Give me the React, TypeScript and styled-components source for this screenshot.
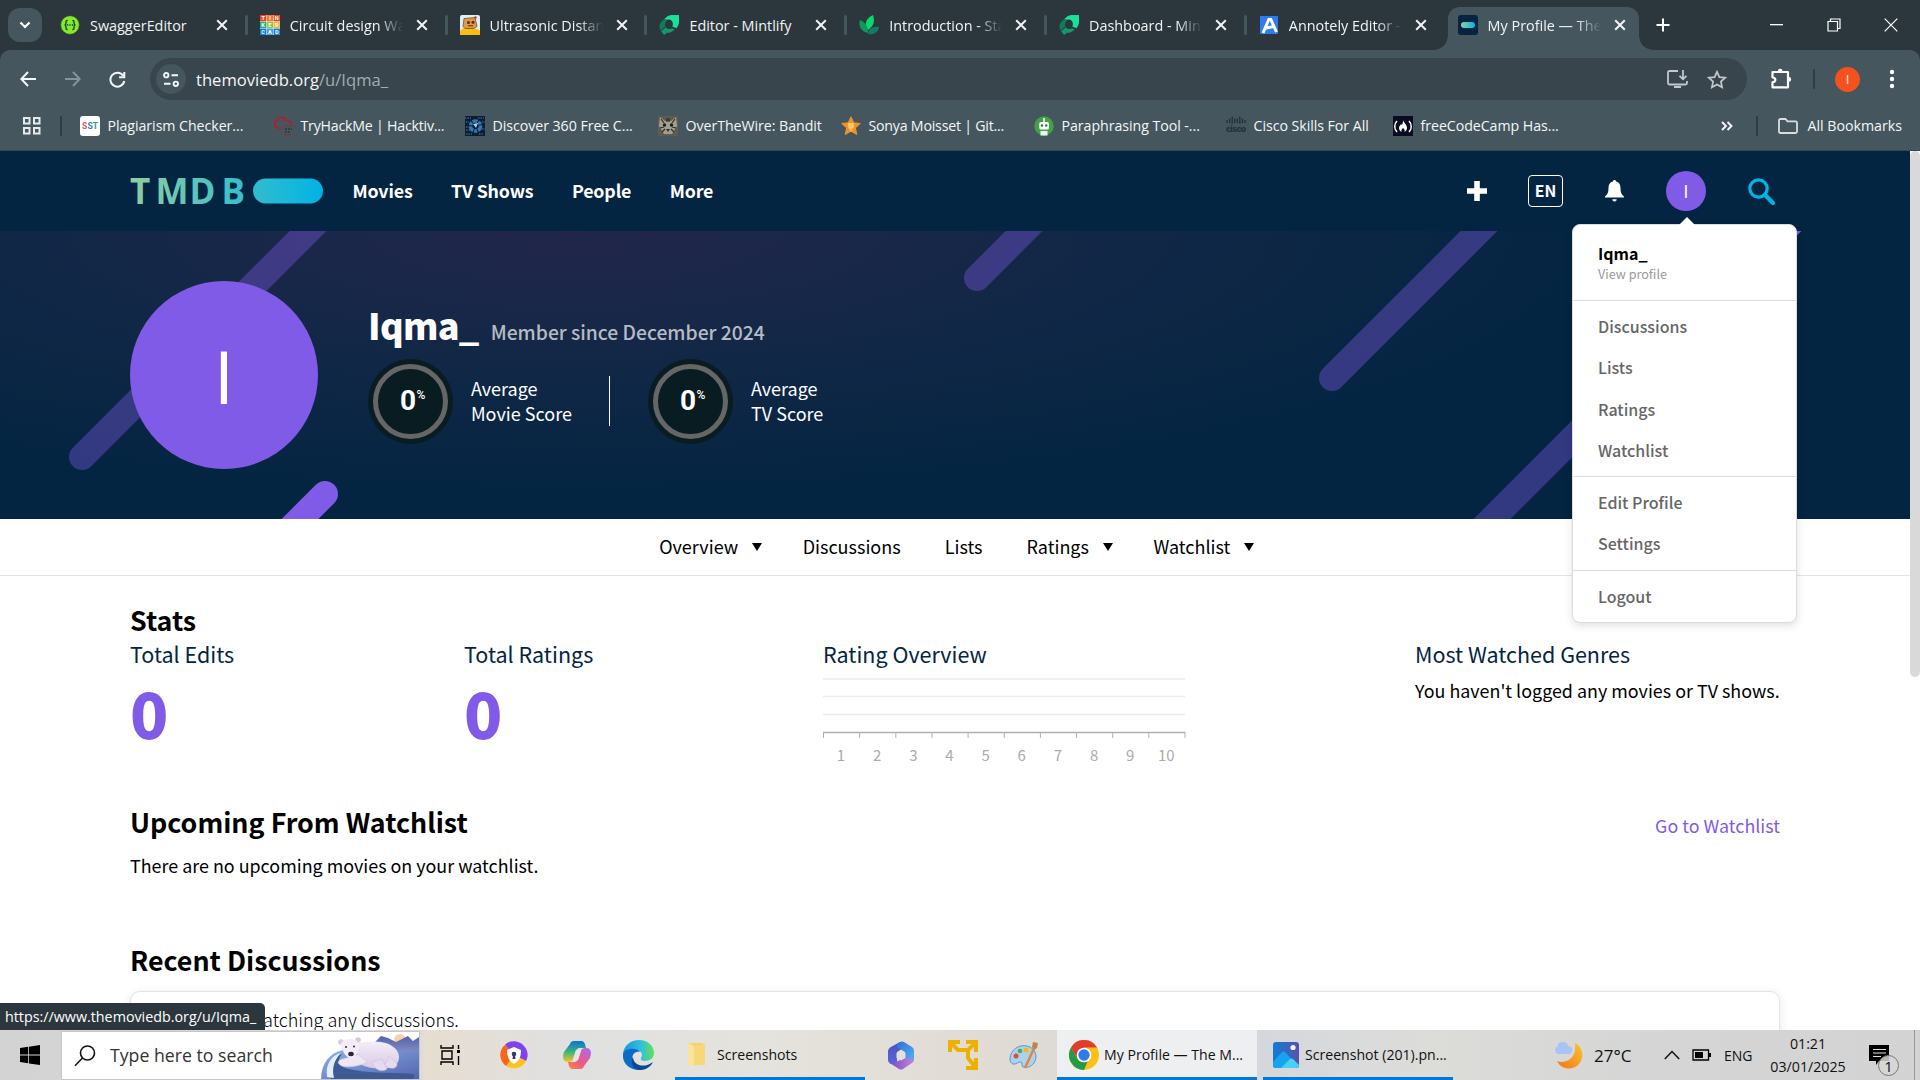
import React from "react";
import styled, { createGlobalStyle, css } from "styled-components";

const site = `"Noto Sans CJK SC", "Noto Sans", sans-serif`;
const system = `"Open Sans", "Noto Sans", sans-serif`;

const color = {
  strip: "#2c373d",
  chrome: "#45565f",
  omnibox: "#38454c",
  navy: "#032541",
  purple: "#805be7",
  blue: "#01b4e4",
  line: "#e3e3e3",
};

const GlobalStyle = createGlobalStyle`
  * { box-sizing: border-box; }
  html, body { margin: 0; padding: 0; overflow: hidden; background: #fff; }
  svg { display: block; flex: none; }
`;

const Screen = styled.div`
  position: relative;
  display: flex;
  flex-direction: column;
  width: 1920px;
  height: 1080px;
  overflow: hidden;
  font-family: ${site};
  color: #000;
`;

/* ---------- Browser chrome ---------- */

const TabStrip = styled.div`
  display: flex;
  height: 50px;
  padding-left: 8px;
  background: ${color.strip};
  font-family: ${system};
`;

const TabSearch = styled.div`
  display: grid;
  place-items: center;
  width: 34px;
  height: 34px;
  margin-top: 8px;
  border-radius: 12px;
  background: ${color.chrome};
`;

const Tabs = styled.div`
  display: flex;
  margin-left: 6px;
`;

const Tab = styled.div<{ $active?: boolean; $divider?: boolean }>`
  position: relative;
  display: flex;
  align-items: center;
  width: 199.8px;
  height: 50px;
  padding-left: 12px;
  color: #f1f4f5;
  ${(p) =>
    p.$divider &&
    css`
      &::after {
        content: "";
        position: absolute;
        right: 0;
        top: 15px;
        width: 3px;
        height: 20px;
        border-radius: 2px;
        background: ${color.chrome};
      }
    `}
  ${(p) =>
    p.$active &&
    css`
      width: 191px;
      margin-top: 7px;
      height: 43px;
      padding-bottom: 7px;
      padding-left: 10px;
      margin-left: 1px;
      border-radius: 12px 12px 0 0;
      background: ${color.chrome};
      &::before,
      &::after {
        content: "";
        position: absolute;
        bottom: 0;
        width: 14px;
        height: 14px;
      }
      &::before {
        left: -14px;
        background: radial-gradient(circle at 0 0, transparent 13.5px, ${color.chrome} 14px);
      }
      &::after {
        right: -14px;
        background: radial-gradient(circle at 100% 0, transparent 13.5px, ${color.chrome} 14px);
      }
    `}
`;

const TabTitle = styled.span<{ $fade?: boolean }>`
  width: 113px;
  margin-left: 10px;
  padding-top: 1px;
  overflow: hidden;
  white-space: nowrap;
  font-size: 14.4px;
  line-height: 22px;
  ${(p) => p.$fade && css`mask-image: linear-gradient(90deg, #000 78%, transparent);`}
`;

const TabClose = styled.span`
  display: grid;
  place-items: center;
  width: 20px;
  margin-left: 9px;
`;

const NewTab = styled.div`
  display: grid;
  place-items: center;
  width: 34px;
  height: 50px;
  margin-left: 7px;
`;

const WindowButtons = styled.div`
  display: flex;
  margin-left: auto;
  padding-right: 1px;
`;

const WindowButton = styled.div`
  display: grid;
  place-items: center;
  width: 57px;
  height: 50px;
`;

const Toolbar = styled.div`
  display: flex;
  align-items: center;
  height: 58px;
  background: ${color.chrome};
  border-radius: 10px 10px 0 0;
  font-family: ${system};
`;

const ToolbarWrap = styled.div`
  background: ${color.strip};
`;

const NavButton = styled.div`
  display: grid;
  place-items: center;
  width: 45px;
  &:first-child { margin-left: 5px; }
`;

const Omnibox = styled.div`
  display: flex;
  align-items: center;
  width: 1597px;
  height: 42px;
  margin-left: 10px;
  padding: 0 20px 0 6px;
  border-radius: 21px;
  background: ${color.omnibox};
`;

const SiteInfo = styled.div`
  display: grid;
  place-items: center;
  width: 30px;
  height: 30px;
  border-radius: 50%;
  background: ${color.chrome};
`;

const Url = styled.div`
  flex: 1;
  margin-left: 10px;
  padding-top: 1px;
  font-size: 16.6px;
  line-height: 24px;
  color: #f4f6f7;
  span { color: #a4acb0; }
`;

const OmniIcons = styled.div`
  display: flex;
  align-items: center;
  gap: 19px;
`;

const ToolbarEnd = styled.div`
  display: flex;
  align-items: center;
  margin-left: 23px;
`;

const Separator = styled.i<{ $l: number; $r: number }>`
  width: 2px;
  height: 20px;
  margin: 0 ${(p) => p.$r}px 0 ${(p) => p.$l}px;
  border-radius: 1px;
  background: #2f3c43;
`;

const ProfileDot = styled.div`
  display: grid;
  place-items: center;
  width: 25px;
  height: 25px;
  margin-right: 22px;
  border-radius: 50%;
  background: #f4511e;
  color: #fff;
  font-size: 13px;
`;

const Bookmarks = styled.div`
  display: flex;
  align-items: center;
  height: 43px;
  padding: 0 18px 7px 22px;
  background: ${color.chrome};
  border-bottom: 1px solid #394952;
  font-family: ${system};
  font-size: 14.2px;
  color: #f4f6f7;
  white-space: nowrap;
`;

const Bookmark = styled.div<{ $w: number; $tight?: boolean }>`
  display: flex;
  align-items: center;
  gap: 7.5px;
  width: ${(p) => p.$w}px;
  letter-spacing: ${(p) => (p.$tight ? "-0.22px" : "-0.05px")};
`;

const BookmarksEnd = styled.div`
  display: flex;
  align-items: center;
  margin-left: auto;
`;

const AllBookmarks = styled.span`
  margin-left: 9px;
`;

/* ---------- Site ---------- */

const Viewport = styled.div`
  display: flex;
  height: 879px;
  background: #fff;
`;

const Page = styled.div`
  width: 1910px;
  height: 879px;
  overflow: hidden;
`;

const Scrollbar = styled.div`
  width: 10px;
  background: #fff;
`;

const Thumb = styled.div`
  height: 526px;
  border-radius: 5px;
  background: #d9d9d9;
`;

const Header = styled.header`
  display: flex;
  align-items: center;
  height: 80px;
  padding: 0 130px;
  background: ${color.navy};
  color: #fff;
`;

const MainNav = styled.nav`
  display: flex;
  gap: 38.4px;
  margin: -2px 0 0 28.5px;
  font-size: 17.8px;
  font-weight: 700;
  letter-spacing: -0.15px;
  line-height: 26px;
`;

const HeaderTools = styled.div`
  display: flex;
  align-items: center;
  margin-left: auto;
  padding-right: 5px;
`;

const Language = styled.div`
  display: grid;
  place-items: center;
  width: 35px;
  height: 32px;
  margin: 0 42px 0 41px;
  border: 1.5px solid #fff;
  border-radius: 4px;
  font-size: 15.8px;
  font-weight: 700;
  line-height: 24px;
`;

const HeaderAvatar = styled.div`
  display: grid;
  place-items: center;
  width: 40px;
  height: 40px;
  margin: 0 42px 0 42px;
  border-radius: 50%;
  background: ${color.purple};
  font-family: ${system};
  font-size: 19px;
  line-height: 22px;
`;

const Hero = styled.section`
  position: relative;
  display: flex;
  align-items: center;
  height: 288px;
  padding: 0 130px;
  overflow: hidden;
  color: #fff;
  background: radial-gradient(ellipse 1060px 268px at 30% 0%, #21264a 0%, #1a2749 25%, #102746 55%, #032541 100%);
`;

const HeroBars = styled.svg`
  position: absolute;
  inset: 0;
`;

const BigAvatar = styled.div`
  position: relative;
  display: grid;
  place-items: center;
  width: 188px;
  height: 188px;
  border-radius: 50%;
  background: ${color.purple};
  font-family: ${system};
  font-size: 73px;
  line-height: 90px;
  padding-top: 2px;
`;

const HeroInfo = styled.div`
  position: relative;
  margin: -7px 0 0 50px;
`;

const NameLine = styled.div`
  display: flex;
  align-items: baseline;
  height: 48px;
  line-height: 48px;
`;

const Name = styled.h2`
  margin: 0;
  font-size: 36px;
  font-weight: 900;
  letter-spacing: -0.7px;
`;

const Since = styled.span`
  margin-left: 12px;
  font-size: 19.3px;
  font-weight: 500;
  color: rgba(255, 255, 255, 0.7);
`;

const Scores = styled.div`
  display: flex;
  align-items: center;
  height: 85px;
  margin: 11px 0 0 0;
`;

const Dial = styled.div`
  display: grid;
  place-items: center;
  width: 85px;
  height: 85px;
  padding: 5px;
  border-radius: 50%;
  background: #081c22;
`;

const DialRing = styled.div`
  display: flex;
  align-items: center;
  justify-content: center;
  width: 75px;
  height: 75px;
  padding: 0 0 1px 4px;
  border: 5px solid #666;
  border-radius: 50%;
  font-family: Roboto, sans-serif;
  font-size: 28px;
  font-weight: 700;
  letter-spacing: -0.5px;
  sup {
    align-self: flex-start;
    margin: 20px 0 0 1px;
    font-size: 12px;
    font-weight: 500;
    line-height: 12px;
  }
`;

const DialLabel = styled.div`
  width: 138px;
  margin-left: 18px;
  font-size: 18px;
  line-height: 25px;
`;

const ScoreDivider = styled.i`
  width: 1px;
  height: 50px;
  margin-right: 38px;
  background: #fff;
`;

const SubNav = styled.nav`
  display: flex;
  justify-content: center;
  gap: 44px;
  height: 57px;
  border-bottom: 1px solid ${color.line};
  font-size: 18px;
  line-height: 55px;
`;

const SubNavItem = styled.div`
  display: flex;
  align-items: center;
  height: 55px;
`;

const Caret = styled.i`
  margin: 0 -3.5px 0 14px;
  border: 5.5px solid transparent;
  border-top: 8.5px solid #000;
  border-bottom: 0;
`;

const Content = styled.main`
  padding: 23px 130px 0;
`;

const Section = styled.section<{ $h: number }>`
  height: ${(p) => p.$h}px;
`;

const SectionHead = styled.div`
  display: flex;
  justify-content: space-between;
  height: 40px;
  line-height: 40px;
`;

const Title = styled.h3`
  margin: 0;
  padding-top: 1px;
  font-size: 26.8px;
  font-weight: 700;
`;

const WatchlistLink = styled.a`
  padding-top: 4px;
  font-size: 17.9px;
  color: ${color.purple};
`;

const StatGrid = styled.div`
  display: grid;
  grid-template-columns: 334px 359px 592px 1fr;
`;

const StatLabel = styled.h4`
  margin: 0;
  font-size: 21.5px;
  font-weight: 400;
  line-height: 30px;
  color: ${color.navy};
`;

const StatValue = styled.div`
  margin-top: 7px;
  font-size: 63px;
  font-weight: 900;
  line-height: 72px;
  color: ${color.purple};
`;

const Paragraph = styled.p<{ $top: number }>`
  margin: ${(p) => p.$top}px 0 0;
  font-size: 17.9px;
  line-height: 25px;
  white-space: nowrap;
`;

const Chart = styled.svg`
  margin-top: 6px;
  font-family: ${site};
`;

const DiscussionCard = styled.div`
  height: 120px;
  margin-top: 12px;
  padding: 15px 25px 15px 33px;
  border: 1px solid ${color.line};
  border-radius: 10px;
  box-shadow: 0 2px 10px rgba(0, 0, 0, 0.1);
  font-size: 18px;
  font-weight: 300;
  line-height: 25px;
`;

/* ---------- Account menu ---------- */

const Menu = styled.div`
  position: absolute;
  left: 1572px;
  top: 224px;
  width: 225px;
  height: 399px;
  border: 1px solid #dcdcdc;
  border-radius: 8px;
  background: #fff;
  box-shadow: 0 3px 8px rgba(0, 0, 0, 0.12);
  &::before {
    content: "";
    position: absolute;
    left: 106px;
    top: -8px;
    border: 8px solid transparent;
    border-top: 0;
    border-bottom-color: #fff;
  }
`;

const MenuGroup = styled.div<{ $h: number }>`
  height: ${(p) => p.$h}px;
  padding: 5px 25px 0;
  & + & { border-top: 1px solid #dcdcdc; }
`;

const MenuItem = styled.div`
  height: 41.4px;
  font-size: 16px;
  font-weight: 500;
  line-height: 40px;
  color: #666;
`;

const MenuName = styled.div`
  margin-top: 11px;
  font-size: 16px;
  font-weight: 700;
  line-height: 24px;
`;

const MenuHint = styled.div`
  padding-top: 1px;
  font-size: 12.6px;
  line-height: 16px;
  color: #999;
`;

const StatusBubble = styled.div`
  position: absolute;
  left: 0;
  top: 1003px;
  width: 265px;
  height: 27px;
  padding-left: 5px;
  border-radius: 0 5px 0 0;
  background: ${color.strip};
  color: #fff;
  font-family: ${system};
  font-size: 14.3px;
  line-height: 28px;
  white-space: nowrap;
`;

/* ---------- Taskbar ---------- */

const Taskbar = styled.div`
  display: flex;
  height: 50px;
  background: linear-gradient(90deg, #d3d3d3 0, #dadada 420px, #e7ddd0 424px, #e0e0e0 560px, #e5e3dd 760px, #e0dbd4 1000px, #d6d7dc 1260px, #dcddd9 1430px, #d5d5d5 1650px, #d3d3d3 100%);
  font-family: ${system};
  color: #111;
`;

const Start = styled.div`
  display: grid;
  place-items: center;
  width: 61px;
  padding-right: 1px;
`;

const Search = styled.div`
  position: relative;
  display: flex;
  align-items: center;
  width: 359px;
  height: 49px;
  margin-top: 1px;
  padding-left: 12px;
  background: #fff;
  border: 1px solid #c6c6c6;
  font-size: 17.7px;
  color: #333;
  overflow: hidden;
  span { margin: -2px 0 0 14px; }
`;

const BearArt = styled.svg`
  margin-left: auto;
`;

const TaskIcon = styled.div<{ $w: number }>`
  display: grid;
  place-items: center;
  width: ${(p) => p.$w}px;
`;

const TaskWindow = styled.div<{ $w: number; $gap: number; $active?: boolean; $pad: number; $space: number }>`
  display: flex;
  align-items: center;
  width: ${(p) => p.$w}px;
  margin-left: ${(p) => p.$gap}px;
  padding: 2px 0 0 ${(p) => p.$pad}px;
  border-bottom: 3px solid #0078d7;
  background: ${(p) => (p.$active ? "#eeeff1" : "transparent")};
  font-size: 14.1px;
  white-space: nowrap;
  svg { margin-right: ${(p) => p.$space}px; }
`;

const Tray = styled.div`
  display: flex;
  align-items: center;
  margin-left: auto;
`;

const Temperature = styled.span`
  width: 70px;
  margin-left: 10px;
  font-size: 17px;
`;

const Lang = styled.span`
  width: 46px;
  font-size: 14px;
`;

const Clock = styled.div`
  width: 76px;
  font-size: 14.2px;
  line-height: 23px;
  text-align: center;
  white-space: nowrap;
`;

const Notifications = styled.div`
  position: relative;
  margin: 0 5px 0 23px;
  width: 40px;
`;

const Count = styled.b`
  position: absolute;
  left: 9px;
  top: 10px;
  display: grid;
  place-items: center;
  width: 21px;
  height: 21px;
  border: 1px solid #777;
  border-radius: 50%;
  background: rgba(214, 214, 214, 0.85);
  font-size: 15px;
  font-weight: 400;
`;

const ShowDesktop = styled.i`
  width: 6px;
  height: 50px;
  border-left: 1px solid #999;
`;

/* ---------- Icons ---------- */

const Cross = () => (
  <svg width="12" height="12" viewBox="0 0 12 12" stroke="#f1f4f5" strokeWidth="2">
    <path d="M1.2 1.2l9.6 9.6M10.8 1.2L1.2 10.8" />
  </svg>
);

const Swagger = () => (
  <svg width="20" height="20" viewBox="0 0 20 20">
    <circle cx="10" cy="10" r="9.3" fill="#85ea2d" stroke="#2c4a1c" strokeWidth=".6" />
    <g fill="none" stroke="#173647" strokeWidth="1.3">
      <path d="M7.6 5.5c-2 0-1.6 1-1.6 2.600s-.4 1.900-1.400 1.900c1 0 1.400.4 1.400 1.900s-.4 2.600 1.600 2.600M12.400 5.500c2 0 1.600 1 1.600 2.600s.4 1.900 1.400 1.900c-1 0-1.400.4-1.400 1.900s.4 2.600-1.600 2.600" />
      <path d="M7 10h1.200M9.400 10h1.200M11.800 10h1.200" />
    </g>
  </svg>
);

const tinkercad = [
  ["T", "#f0441f"], ["I", "#f4772c"], ["N", "#f0441f"],
  ["K", "#24b27c"], ["E", "#8dc63f"], ["R", "#fbb034"],
  ["C", "#1477d1"], ["A", "#3aa4de"], ["D", "#1477d1"],
];

const Tinkercad = () => (
  <svg width="20" height="20" viewBox="0 0 20 20">
    <rect width="20" height="20" fill="#f4f4f4" />
    {tinkercad.map(([letter, fill], i) => (
      <g key={i} transform={`translate(${(i % 3) * 6.8},${Math.floor(i / 3) * 6.8})`}>
        <rect width="6.3" height="6.3" fill={fill} />
        <text x="3.15" y="5.2" textAnchor="middle" fontFamily="Roboto" fontWeight="700" fontSize="5.6" fill="#fff">{letter}</text>
      </g>
    ))}
  </svg>
);

const Robot = () => (
  <svg width="20" height="20" viewBox="0 0 20 20">
    <rect width="20" height="20" rx="2" fill="#dfeffa" />
    <path d="M0 20v-4c3-4 6-4 10-3s8 0 10 3v4z" fill="#fbbd12" />
    <path d="M4 3.500l11-1 2 9-3 2H5l-2-2z" fill="#dd9a48" stroke="#6b421f" strokeWidth=".7" />
    <circle cx="8.5" cy="7.500" r="1.5" fill="#5a2c18" />
    <circle cx="13" cy="7.200" r="1.5" fill="#5a2c18" />
    <path d="M8 10.800h5" stroke="#7a1f12" />
    <circle cx="15.5" cy="2.500" r="1.200" fill="#c53a22" />
  </svg>
);

const Mintlify = () => (
  <svg width="20" height="20" viewBox="0 0 20 20">
    <path d="M8.500 1.200C10 .3 12 0 14 0h6v6.500c0 3-1 5-2.700 6.700l-3.900-1.700c1-2.300.5-4.500-1-5.900-1-.9-2.500-1.300-4-.8L5 4.300z" fill="#18e299" />
    <path d="M5 4.300l3.200 1.300c-2.100 1.500-2.600 4-1.900 6L1.600 15.600C-.6 12 .3 7.500 5 4.300z" fill="#15795a" />
    <path d="M2 16.200l4.800-3.900c1.300 1.900 3.800 2.400 6 .9l2.900 1.300c-2.500 2.600-5 3.500-7.700 3.300L5.200 20z" fill="#0f9a6c" />
  </svg>
);

const Leaf = () => (
  <svg width="20" height="20" viewBox="0 0 20 20">
    <path d="M14 0c2 6 1 11-5 15C5 10 6 4 14 0z" fill="#0dd66c" />
    <path d="M1 5c5 2 8 6 8 13C3 17-1 12 1 5z" fill="#0a9b5c" />
    <path d="M20 12c-1 6-6 8-11 7 0-5 5-8 11-7z" fill="#17786a" />
  </svg>
);

const Annotely = () => (
  <svg width="20" height="20" viewBox="0 0 20 20">
    <rect x="1" y="1" width="18" height="18" fill="#2f7bf0" />
    <path d="M4 18L9.800 4.500h2L17.500 17M5.500 13.500l9-2" fill="none" stroke="#fff" strokeWidth="3" />
  </svg>
);

const TmdbIcon = () => (
  <svg width="20" height="20" viewBox="0 0 20 20">
    <defs>
      <linearGradient id="tmdbIcon"><stop stopColor="#90cea1" /><stop offset="1" stopColor="#01b4e4" /></linearGradient>
    </defs>
    <rect width="20" height="20" rx="3" fill="#032541" />
    <rect x="3" y="7" width="14" height="6" rx="3" fill="url(#tmdbIcon)" />
  </svg>
);

const Sst = () => (
  <svg width="20" height="20" viewBox="0 0 20 20" fontFamily="Roboto" fontWeight="700" fontSize="8.5">
    <rect width="20" height="20" rx="3" fill="#fff" />
    <text x="2" y="13" fill="#ef5350">S</text>
    <text x="7.5" y="13" fill="#2f7bd8">S</text>
    <text x="12.8" y="13" fill="#25a56a">T</text>
  </svg>
);

const TryHackMe = () => (
  <svg width="20" height="20" viewBox="0 0 20 20">
    <path d="M8 12H4.500a4 4 0 01-.5-7.500C5 1 11 0 13 4.500c3-.5 5 1 5 3.500" fill="none" stroke="#c1171d" strokeWidth="1.4" />
    <path d="M11 10h8M11 19h7" stroke="#a71c24" strokeWidth="1.600" strokeDasharray="2 1" opacity=".8" />
    <path d="M12 13h7M12 16h6" stroke="#2a3740" strokeWidth="1.600" strokeDasharray="2 1" />
  </svg>
);

const Discover = () => (
  <svg width="20" height="20" viewBox="0 0 20 20">
    <rect width="20" height="20" fill="#0d1d30" />
    <circle cx="10.500" cy="10" r="5" fill="none" stroke="#3577b3" strokeWidth="3.500" strokeDasharray="5 1 3 1" />
    <path d="M8 8l5-1-2 5z" fill="#9fd0ef" />
    <path d="M0 2h6M13 2h6M1 18h6M14 18h5M1 6h3M1 11h3M1 14h4M17 6h3M17 13h3" stroke="#315f8d" strokeWidth="1.5" strokeDasharray="1.5 1" />
  </svg>
);

const Cat = () => (
  <svg width="20" height="20" viewBox="0 0 20 20">
    <rect width="20" height="20" fill="#5e5b50" />
    <path d="M2 1l5 4h6l5-4 1 9-5 8H6L1 10z" fill="#a3a08f" />
    <path d="M3 3l3 4M17 3l-3 4M9 2v4M11 2v4M2 12l4-1M18 12l-4-1M4 16l3-3M16 16l-3-3" stroke="#2d2c26" strokeWidth="1.2" />
    <circle cx="6.5" cy="9" r="1.7" fill="#1b1d18" />
    <circle cx="13.5" cy="9" r="1.7" fill="#1b1d18" />
    <path d="M8 13h4l-2 3z" fill="#34302b" />
  </svg>
);

const StarIcon = () => (
  <svg width="20" height="20" viewBox="0 0 20 20">
    <path d="M10 .8l2.800 6 6.500.7-4.900 4.400 1.400 6.600L10 15.200l-5.800 3.300 1.400-6.600L.7 7.500l6.500-.7z" fill="#f0932b" stroke="#f0932b" strokeWidth="1" strokeLinejoin="round" />
    <path d="M7 7h6v3c0 2-1.300 3-2.300 3v2h-1.400v-2C8.300 13 7 12 7 10z" fill="#fbc761" />
  </svg>
);

const Quill = () => (
  <svg width="20" height="20" viewBox="0 0 20 20">
    <circle cx="10" cy="10" r="9.7" fill="#43a047" />
    <path d="M10 2v4" stroke="#fff" strokeWidth="1.5" />
    <rect x="5.3" y="6" width="9.6" height="7.5" rx="1.5" fill="#fff" />
    <path d="M6.500 15h7v4.500h-7z" fill="#e9f5ea" />
    <circle cx="8" cy="9.5" r="1.2" fill="#2e6e33" />
    <circle cx="12.2" cy="9.5" r="1.2" fill="#2e6e33" />
  </svg>
);

const Cisco = () => (
  <svg width="20" height="20" viewBox="0 0 20 20">
    <path d="M1 4v3M3.600 2.500V7M6.200 .5V8M8.700 2.500V7M11.300 2.500V7M13.800 .5V8M16.400 2.500V7M19 4v3" stroke="#253138" strokeWidth="1.3" />
    <text x="0" y="16" fontFamily="Roboto" fontWeight="900" fontSize="9" textLength="20" fill="#253138">cisco</text>
  </svg>
);

const Camp = () => (
  <svg width="20" height="20" viewBox="0 0 20 20">
    <rect width="20" height="20" fill="#0a0a23" />
    <path d="M4 5c-3 3-3 8 0 11M16 5c3 3 3 8 0 11" fill="none" stroke="#fff" strokeWidth="1.5" />
    <path d="M10 4c.5 3 4 4 4 8 0 2-1.200 3.300-2.500 4 .6-1.500.3-2.700-1.500-4-1.500 1.200-2 2.500-1.500 4C7 15 6 13.700 6 12c0-2 1.500-2.500 2-4l.8 1C9.800 8 10 6 10 4z" fill="#fff" />
  </svg>
);

const tabs = [
  { icon: <Swagger />, title: "SwaggerEditor" },
  { icon: <Tinkercad />, title: "Circuit design Wa", fade: true },
  { icon: <Robot />, title: "Ultrasonic Distan", fade: true },
  { icon: <Mintlify />, title: "Editor - Mintlify" },
  { icon: <Leaf />, title: "Introduction - Sta", fade: true },
  { icon: <Mintlify />, title: "Dashboard - Min", fade: true },
  { icon: <Annotely />, title: "Annotely Editor - ", fade: true },
];

const bookmarks = [
  { icon: <Sst />, title: "Plagiarism Checker...", w: 193 },
  { icon: <TryHackMe />, title: "TryHackMe | Hacktiv...", w: 192, tight: true },
  { icon: <Discover />, title: "Discover 360 Free C...", w: 193 },
  { icon: <Cat />, title: "OverTheWire: Bandit", w: 183 },
  { icon: <StarIcon />, title: "Sonya Moisset | Git...", w: 193, tight: true },
  { icon: <Quill />, title: "Paraphrasing Tool -...", w: 192 },
  { icon: <Cisco />, title: "Cisco Skills For All", w: 167 },
  { icon: <Camp />, title: "freeCodeCamp Has...", w: 180 },
];

const Browser = () => (
  <>
    <TabStrip>
      <TabSearch>
        <svg width="12" height="8" viewBox="0 0 12 8" fill="none" stroke="#fff" strokeWidth="2.2"><path d="M1.500 1.500L6 6l4.500-4.500" /></svg>
      </TabSearch>
      <Tabs>
        {tabs.map((t, i) => (
          <Tab key={i} $divider={i < 6}>
            {t.icon}
            <TabTitle $fade={t.fade}>{t.title}</TabTitle>
            <TabClose><Cross /></TabClose>
          </Tab>
        ))}
        <Tab $active>
          <TmdbIcon />
          <TabTitle $fade>My Profile — The</TabTitle>
          <TabClose><Cross /></TabClose>
        </Tab>
      </Tabs>
      <NewTab>
        <svg width="14" height="14" viewBox="0 0 14 14" stroke="#fff" strokeWidth="2"><path d="M7 .5v13M.5 7h13" /></svg>
      </NewTab>
      <WindowButtons>
        <WindowButton><svg width="13" height="2"><rect width="13" height="1.3" fill="#fff" /></svg></WindowButton>
        <WindowButton>
          <svg width="14" height="14" viewBox="0 0 14 14" fill="none" stroke="#fff" strokeWidth="1.2"><path d="M1 3.500h9.500V13H1zM3.500 3.500V1H13v9.500h-2.500" /></svg>
        </WindowButton>
        <WindowButton>
          <svg width="14" height="14" viewBox="0 0 14 14" stroke="#fff" strokeWidth="1.2"><path d="M.7.7l12.600 12.600M13.300.7L.7 13.300" /></svg>
        </WindowButton>
      </WindowButtons>
    </TabStrip>
    <ToolbarWrap>
      <Toolbar>
        <NavButton>
          <svg width="16" height="16" viewBox="0 0 16 16" fill="none" stroke="#f4f6f7" strokeWidth="2"><path d="M16 8H1.500M8 1L1.300 8 8 15" /></svg>
        </NavButton>
        <NavButton>
          <svg width="16" height="16" viewBox="0 0 16 16" fill="none" stroke="#87939a" strokeWidth="2"><path d="M0 8h14.500M8 1l6.700 7L8 15" /></svg>
        </NavButton>
        <NavButton>
          <svg width="17" height="17" viewBox="0 0 17 17" fill="none" stroke="#f4f6f7" strokeWidth="2"><path d="M14.200 4.700A7 7 0 1015.300 10M15.300 1v5.200h-5.200" /></svg>
        </NavButton>
        <Omnibox>
          <SiteInfo>
            <svg width="16" height="15" viewBox="0 0 16 15" fill="none" stroke="#f4f6f7" strokeWidth="1.9"><circle cx="3.2" cy="3.2" r="2.2" /><path d="M8.500 3.200H15M1 11.800h6.500" /><circle cx="12.8" cy="11.8" r="2.2" /></svg>
          </SiteInfo>
          <Url>themoviedb.org<span>/u/Iqma_</span></Url>
          <OmniIcons>
            <svg width="21" height="18" viewBox="0 0 21 18" fill="none" stroke="#c2c8cb" strokeWidth="1.8"><path d="M11 1H2.500Q1 1 1 2.500v10.500Q1 14.500 2.500 14.500h16q1.500 0 1.500-1.500v-2M7 17h7M16 0v9M12.500 5.800L16 9.300l3.500-3.500" /></svg>
            <svg width="20" height="19" viewBox="0 0 20 19" fill="none" stroke="#c2c8cb" strokeWidth="1.7"><path d="M10 1.800l2.400 5.300 5.800.6-4.300 3.900 1.200 5.700-5.100-2.900-5.100 2.900 1.200-5.700-4.300-3.900 5.800-.6z" /></svg>
          </OmniIcons>
        </Omnibox>
        <ToolbarEnd>
          <svg width="22" height="22" viewBox="0 0 22 22" fill="none" stroke="#fff" strokeWidth="2.2"><path d="M2.500 4h15.500v15.300H2.500v-5c3.800-.6 3.800-4.400 0-5z" strokeLinejoin="round" /><path d="M7.800 3.200a2.400 2.400 0 014.800 0zM18.800 9a2.400 2.400 0 010 4.800z" fill="#fff" stroke="none" /></svg>
          <Separator $l={21} $r={20} />
          <ProfileDot>I</ProfileDot>
          <svg width="20" height="20" viewBox="0 0 20 20" fill="#fff"><circle cx="10" cy="3" r="2.2" /><circle cx="10" cy="10" r="2.2" /><circle cx="10" cy="17" r="2.2" /></svg>
        </ToolbarEnd>
      </Toolbar>
    </ToolbarWrap>
    <Bookmarks>
      <svg width="19" height="18" viewBox="0 0 19 18" fill="none" stroke="#e6eaec" strokeWidth="2"><path d="M2 1h5.500v5.500H2zM12 1h5.500v5.500H12zM2 11h5.500v5.500H2zM12 11h5.500v5.500H12z" /></svg>
      <Separator $l={19} $r={18} />
      {bookmarks.map((b) => (
        <Bookmark key={b.title} $w={b.w} $tight={b.tight}>{b.icon}{b.title}</Bookmark>
      ))}
      <BookmarksEnd>
        <svg width="12" height="10" viewBox="0 0 12 10" fill="none" stroke="#f4f6f7" strokeWidth="1.9"><path d="M1 1l4 4-4 4M6.500 1l4 4-4 4" /></svg>
        <Separator $l={23} $r={20} />
        <svg width="20" height="16" viewBox="0 0 20 16" fill="none" stroke="#d9dde0" strokeWidth="1.8"><path d="M1 2.500Q1 1 2.500 1h5l2 2.300h8Q19 3.300 19 4.800v8.700q0 1.500-1.500 1.500h-15Q1 15 1 13.500z" /></svg>
        <AllBookmarks>All Bookmarks</AllBookmarks>
      </BookmarksEnd>
    </Bookmarks>
  </>
);

const Logo = () => (
  <svg width="194" height="26" viewBox="0 0 194 26">
    <defs>
      <linearGradient id="logo" gradientUnits="userSpaceOnUse" x1="0" y1="0" x2="193" y2="0">
        <stop stopColor="#90cea1" /><stop offset=".56" stopColor="#3cbec9" /><stop offset="1" stopColor="#00b3e5" />
      </linearGradient>
    </defs>
    <text x="0 25.5 59.5 91.5" y="25.5" fontFamily="Open Sans, sans-serif" fontWeight="700" fontSize="35" fill="url(#logo)">TMDB</text>
    <rect x="123" y=".5" width="70" height="25" rx="12.5" fill="url(#logo)" />
  </svg>
);

const Score = ({ kind }: { kind: string }) => (
  <>
    <Dial><DialRing>0<sup>%</sup></DialRing></Dial>
    <DialLabel>Average<br />{kind} Score</DialLabel>
  </>
);

const RatingChart = () => (
  <Chart width="363" height="96" viewBox="0 0 363 96">
    <path d="M0 4h362M0 21.500h362M0 39.500h362" stroke="#ececec" strokeWidth="1.5" />
    <path d="M0 57.500h362" stroke="#b0b0b0" strokeWidth="1.5" />
    {Array.from({ length: 11 }, (_, i) => (
      <path key={i} d={`M${i * 36.15 + 0.5} 57v6`} stroke="#b0b0b0" />
    ))}
    {Array.from({ length: 10 }, (_, i) => (
      <text key={i} x={i * 36.15 + 18} y="86" fontSize="15" textAnchor="middle" fill="#aaa">{i + 1}</text>
    ))}
  </Chart>
);

const Site = () => (
  <Viewport>
    <Page>
      <Header>
        <Logo />
        <MainNav><span>Movies</span><span>TV Shows</span><span>People</span><span>More</span></MainNav>
        <HeaderTools>
          <svg width="20" height="20" viewBox="0 0 20 20"><path d="M7.200 0h5.600v7.200H20v5.600h-7.200V20H7.200v-7.200H0V7.200h7.200z" fill="#fff" /></svg>
          <Language>EN</Language>
          <svg width="19" height="22" viewBox="0 0 19 22" fill="#fff"><path d="M9.500 0c1 0 1.500.6 1.600 1.500 3 .8 4.400 3 4.400 6.200 0 5 1.200 7 3.500 8.800v1H0v-1C2.300 14.700 3.500 12.700 3.500 7.700c0-3.200 1.400-5.400 4.400-6.200C8 .6 8.500 0 9.500 0zM7.300 19.300h4.400a2.200 2.200 0 01-4.400 0z" /></svg>
          <HeaderAvatar>I</HeaderAvatar>
          <svg width="27" height="27" viewBox="0 0 27 27" fill="none" stroke={color.blue}><circle cx="10.5" cy="10.5" r="8.7" strokeWidth="3.2" /><path d="M17 17l8 8" strokeWidth="4.2" strokeLinecap="round" /></svg>
        </HeaderTools>
      </Header>
      <Hero>
        <HeroBars width="1910" height="288" viewBox="0 0 1910 288" strokeWidth="26" strokeLinecap="round" stroke={color.purple}>
          <path d="M82 226L328-20M977 47l70-70M1332 147l170-170M1452 328L1600 180" opacity=".38" />
          <path d="M325 263l-60 60M1803-20L1700 83" />
        </HeroBars>
        <BigAvatar>I</BigAvatar>
        <HeroInfo>
          <NameLine><Name>Iqma_</Name><Since>Member since December 2024</Since></NameLine>
          <Scores><Score kind="Movie" /><ScoreDivider /><Score kind="TV" /></Scores>
        </HeroInfo>
      </Hero>
      <SubNav>
        <SubNavItem>Overview<Caret /></SubNavItem>
        <SubNavItem>Discussions</SubNavItem>
        <SubNavItem>Lists</SubNavItem>
        <SubNavItem>Ratings<Caret /></SubNavItem>
        <SubNavItem>Watchlist<Caret /></SubNavItem>
      </SubNav>
      <Content>
        <Section $h={202}>
          <SectionHead><Title>Stats</Title></SectionHead>
          <StatGrid>
            <div><StatLabel>Total Edits</StatLabel><StatValue>0</StatValue></div>
            <div><StatLabel>Total Ratings</StatLabel><StatValue>0</StatValue></div>
            <div><StatLabel>Rating Overview</StatLabel><RatingChart /></div>
            <div><StatLabel>Most Watched Genres</StatLabel><Paragraph $top={9}>You haven't logged any movies or TV shows.</Paragraph></div>
          </StatGrid>
        </Section>
        <Section $h={138}>
          <SectionHead><Title>Upcoming From Watchlist</Title><WatchlistLink>Go to Watchlist</WatchlistLink></SectionHead>
          <Paragraph $top={12}>There are no upcoming movies on your watchlist.</Paragraph>
        </Section>
        <Section $h={180}>
          <SectionHead><Title>Recent Discussions</Title></SectionHead>
          <DiscussionCard>You're not watching any discussions.</DiscussionCard>
        </Section>
      </Content>
    </Page>
    <Scrollbar><Thumb /></Scrollbar>
  </Viewport>
);

const AccountMenu = () => (
  <Menu>
    <MenuGroup $h={75}><MenuName>Iqma_</MenuName><MenuHint>View profile</MenuHint></MenuGroup>
    <MenuGroup $h={176}>
      {["Discussions", "Lists", "Ratings", "Watchlist"].map((t) => <MenuItem key={t}>{t}</MenuItem>)}
    </MenuGroup>
    <MenuGroup $h={94}>{["Edit Profile", "Settings"].map((t) => <MenuItem key={t}>{t}</MenuItem>)}</MenuGroup>
    <MenuGroup $h={52}><MenuItem>Logout</MenuItem></MenuGroup>
  </Menu>
);

const Desktop = () => (
  <Taskbar>
    <Start>
      <svg width="20" height="20" viewBox="0 0 20 20" fill="#000"><path d="M0 2.900l8.200-1.100v7.700H0zM9 1.700L20 0v9.500H9zM0 10.400h8.200v7.800L0 17.100zM9 10.400h11V20L9 18.400z" /></svg>
    </Start>
    <Search>
      <svg width="22" height="22" viewBox="0 0 22 22" fill="none" stroke="#111" strokeWidth="1.6"><circle cx="13.5" cy="8" r="7" /><path d="M8.500 13L1 20.700" /></svg>
      <span>Type here to search</span>
      <BearArt width="98" height="48" viewBox="0 0 98 48">
        <defs>
          <linearGradient id="ice" x1="0" y1="0" x2="1" y2="1"><stop stopColor="#8fb5e6" /><stop offset="1" stopColor="#5162b0" /></linearGradient>
          <linearGradient id="rock" x1="0" y1="0" x2="0" y2="1"><stop stopColor="#5561a6" /><stop offset="1" stopColor="#8b9bd4" /></linearGradient>
          <linearGradient id="fur" x1="0" y1="0" x2="0" y2="1"><stop stopColor="#f3edf8" /><stop offset="1" stopColor="#d9c9e6" /></linearGradient>
        </defs>
        <circle cx="79" cy="8" r="6" fill="#fbd0ac" />
        <path d="M46 18L60 4l7 2 8 4 12-6 5 5 6-4v20H46z" fill="url(#rock)" />
        <path d="M0 48c0-16 8-27 22-30 24-3 46 4 76 0v30z" fill="url(#ice)" />
        <path d="M10 47C8 31 13 24 21 22c-7 9-2 14 12 16 20 4 40 2 60 4v5z" fill="#3e5a94" />
        <path d="M6 45C4 32 11 23 20 21c-8 8-9 17-7 25z" fill="#e3eefb" />
        <path d="M34 12c10-3 28-4 37 2 8 5 9 13 4 19-8 5-26 5-36-1z" fill="url(#fur)" />
        <path d="M19 28c7-3 12-2 18-6l9 8c-6 4-19 6-25 4-4-2-5-4-2-6z" fill="#efe6f5" stroke="#d5c3df" strokeWidth=".6" />
        <path d="M51 30l10-3 5 10c-6 4-13 0-15-7zM68 24l8 8c0 6-9 5-12 1z" fill="#e6daee" stroke="#d0bfdc" strokeWidth=".6" />
        <circle cx="20" cy="10" r="2.8" fill="#d9c8e2" />
        <circle cx="37" cy="8" r="2.8" fill="#d9c8e2" />
        <path d="M20 12c2-6 15-7 18 0 1 6-3 14-8 14s-10-8-10-14z" fill="#f4edf8" />
        <ellipse cx="30" cy="22" rx="2.8" ry="2.200" fill="#2d2638" />
        <circle cx="25" cy="15" r="1" fill="#2d2638" /><circle cx="33" cy="14.500" r="1" fill="#2d2638" />
      </BearArt>
    </Search>
    <TaskIcon $w={60}>
      <svg width="21" height="20" viewBox="0 0 21 20" fill="none" stroke="#000" strokeWidth="1.4"><path d="M1 0v3h12V0M2 6h10v8H2zM1 20v-3h12v3M18.500 0v4M18.500 11v9" /><path d="M17 6.500h3" strokeWidth="3" /></svg>
    </TaskIcon>
    <TaskIcon $w={68}>
      <svg width="28" height="28" viewBox="0 0 28 28">
        <path d="M14 14L5 4C9-1 19-1 24 5c5 6 4 11 2 15z" fill="#7f42ee" />
        <path d="M14 14l12 6c-4 8-14 9-20 5z" fill="#fac31d" />
        <path d="M14 14L6 25C-2 19-1 8 5 4z" fill="#fb641e" />
        <path d="M14 6l7 3c0 7-2 11-7 14-5-3-7-7-7-14z" fill="#fff" />
        <circle cx="14" cy="13" r="2.3" fill="#303c64" /><path d="M13 14h2l.5 4h-3z" fill="#303c64" />
      </svg>
    </TaskIcon>
    <TaskIcon $w={58}>
      <svg width="28" height="28" viewBox="0 0 28 28">
        <defs>
          <linearGradient id="cop1" x1="0" y1="0" x2="0" y2="1"><stop stopColor="#0a72db" /><stop offset=".5" stopColor="#35b47e" /><stop offset="1" stopColor="#f5c52b" /></linearGradient>
          <linearGradient id="cop2" x1="1" y1="0" x2="0" y2="1"><stop stopColor="#a86bf4" /><stop offset=".6" stopColor="#ee5a7f" /><stop offset="1" stopColor="#fb8a3c" /></linearGradient>
        </defs>
        <path d="M7 3c1-3 3-3 5-3h6c3 0 4 2 5 7h-6c-3 0-4 2-5 5l-2 6c-1 3-3 3-5 3-5 0-6-4-4-10z" fill="url(#cop1)" />
        <path d="M21 25c-1 3-3 3-5 3h-6c-3 0-4-2-5-7h6c3 0 4-2 5-5l2-6c1-3 3-3 5-3 5 0 6 4 4 10z" fill="url(#cop2)" />
        <path d="M13 9h5l-3 10h-5z" fill="#e9e4e4" />
      </svg>
    </TaskIcon>
    <TaskIcon $w={65}>
      <svg width="31" height="30" viewBox="0 0 31 30">
        <defs>
          <linearGradient id="edge"><stop stopColor="#1695df" /><stop offset=".6" stopColor="#2fc3de" /><stop offset="1" stopColor="#68df52" /></linearGradient>
        </defs>
        <path d="M0 14C1 5 8 0 16 0c9 0 15 6 15 13 0 5-4 8-9 8-3 0-5-1-4-3 3-5-1-8-6-8C7 10 3 12 0 14z" fill="url(#edge)" />
        <path d="M0 14c2-6 14-7 17-2-6-1-9 4-7 9 3 6 11 8 19 2-3 5-8 7-13 7C6 30-1 23 0 14z" fill="#0b6cc4" />
        <path d="M10 17c0 8 11 12 20 5-4 8-13 9-17 7-5-3-5-9-3-12z" fill="#0d4692" />
      </svg>
    </TaskIcon>
    <TaskWindow $w={190} $gap={4} $pad={12} $space={11}>
      <svg width="19" height="26" viewBox="0 0 19 26"><path d="M1 1h15v19H1z" fill="#f4d26c" /><path d="M1 1l6 3v21l-6-3z" fill="#fbe49a" /><path d="M7 4l11-2v21H7z" fill="#f7d777" /></svg>
      Screenshots
    </TaskWindow>
    <TaskIcon $w={71}>
      <svg width="26" height="29" viewBox="0 0 26 29">
        <defs>
          <linearGradient id="off1" x1="0" y1="0" x2="0" y2="1"><stop stopColor="#4a52c4" /><stop offset="1" stopColor="#5c66d8" /></linearGradient>
          <linearGradient id="off2" x1="0" y1="0" x2="1" y2="1"><stop stopColor="#2f6fd8" /><stop offset="1" stopColor="#52b4f2" /></linearGradient>
          <linearGradient id="off3" x1="0" y1="0" x2="1" y2="0"><stop stopColor="#7a4ac0" /><stop offset="1" stopColor="#c083e0" /></linearGradient>
        </defs>
        <path d="M12 1L2 6.500Q0 8 0 10v9c0 3 3 5 7 4l2-2V11l8-5z" fill="url(#off1)" />
        <path d="M12 1q2-1 4 0l8 5q2 1 2 4v9q-1 3-6 1l-3-2v-7l-8-5V3z" fill="url(#off2)" />
        <path d="M1 21.500q4 2 8-1l8-4 9 2q0 2-2 3.500L15 28q-2 1-4 0z" fill="url(#off3)" />
        <path d="M13 9.500l4.500 2.500v5L13 19.500 8.500 17v-5z" fill="#e4dfda" />
      </svg>
    </TaskIcon>
    <TaskIcon $w={53}>
      <svg width="30" height="30" viewBox="0 0 30 30" fill="none" stroke="#ecb100" strokeWidth="4"><path d="M2 12V2h10M2 2l8 8h10M18 2h10v10M28 2l-8 8v8l8 10M18 28h10V18" /></svg>
    </TaskIcon>
    <TaskIcon $w={70}>
      <svg width="30" height="29" viewBox="0 0 30 29">
        <path d="M1 18C1 9 10 3 18 5c9 2 11 11 7 17-3 4-7 5-11 4-2-1 0-4-2-5s-5 3-8 2c-2-1-3-2-3-5z" fill="#a9d2ee" stroke="#5c9bc6" />
        <circle cx="7" cy="15" r="2.5" fill="#e74a3b" /><circle cx="11" cy="10" r="2.3" fill="#47b04b" /><circle cx="17" cy="9" r="2.5" fill="#f6b720" />
        <path d="M26 5L16 27" stroke="#e98535" strokeWidth="2.5" /><path d="M23 6l1-5 5 1-1 5-3 2z" fill="#b98550" />
      </svg>
    </TaskIcon>
    <TaskWindow $w={200} $gap={-2} $pad={12} $space={5} $active>
      <svg width="30" height="30" viewBox="0 0 30 30">
        <circle cx="15" cy="15" r="15" fill="#fbc116" />
        <path d="M2 7.500A15 15 0 0128 7.500H15L8.500 18.800z" fill="#e33b2e" />
        <path d="M2 7.500l6.500 11.300c2 3.500 6 4.200 10 3L15 30A15 15 0 012 7.500z" fill="#249a45" />
        <circle cx="15" cy="15" r="7.3" fill="#fff" /><circle cx="15" cy="15" r="5.7" fill="#2b7de9" />
      </svg>
      My Profile — The M...
    </TaskWindow>
    <TaskWindow $w={190} $gap={6} $pad={10} $space={6}>
      <svg width="26" height="26" viewBox="0 0 26 26">
        <defs><linearGradient id="pic" x1="0" x2="1"><stop stopColor="#0f7dd4" /><stop offset="1" stopColor="#5a4fae" /></linearGradient></defs>
        <rect width="26" height="26" rx="3" fill="url(#pic)" />
        <path d="M0 20l9-10q1.500-1 3 0l14 15q-1 1-3 1H3q-3 0-3-3z" fill="#16a4ee" /><path d="M8 26l9-9q1.500-1 3 0l6 6q0 3-3 3z" fill="#49d0f7" /><circle cx="20" cy="5.5" r="2.6" fill="#eef6ff" />
      </svg>
      Screenshot (201).pn...
    </TaskWindow>
    <Tray>
      <svg width="30" height="29" viewBox="0 0 30 29">
        <defs><linearGradient id="moon" x1="1" y1="0" x2="0" y2="1"><stop stopColor="#fdc52c" /><stop offset="1" stopColor="#f0761c" /></linearGradient></defs>
        <path d="M21 2c9 5 9 15 4 21S8 30 3 20c8 3 20-1 18-18z" fill="url(#moon)" />
        <path d="M4 13a4 4 0 01-.5-7.500C4 2 6 1 9 1s5 2 5 4c4 0 5 3 4 6-1 1-2 2-3 2z" fill="#a9c3f2" />
      </svg>
      <Temperature>27°C</Temperature>
      <svg width="16" height="10" viewBox="0 0 16 10" fill="none" stroke="#111" strokeWidth="1.5"><path d="M.8 9L8 1.500 15.200 9" /></svg>
      <TaskIcon $w={44}>
        <svg width="20" height="12" viewBox="0 0 20 12"><path d="M1 1h15.500v10H1z" fill="none" stroke="#000" strokeWidth="1.3" /><path d="M3 3h8v6H3zM17 4h2v4h-2z" /></svg>
      </TaskIcon>
      <Lang>ENG</Lang>
      <Clock>01:21<br />03/01/2025</Clock>
      <Notifications>
        <svg width="21" height="20" viewBox="0 0 21 20"><path d="M0 0h20v16H10l-3 4v-4H0z" /><path d="M4 4.500h13M4 8h13M4 11.500h8" stroke="#ddd" strokeWidth="1.2" /></svg>
        <Count>1</Count>
      </Notifications>
      <ShowDesktop />
    </Tray>
  </Taskbar>
);

export default function App() {
  return (
    <Screen>
      <GlobalStyle />
      <Browser />
      <Site />
      <Desktop />
      <AccountMenu />
      <StatusBubble>https://www.themoviedb.org/u/Iqma_</StatusBubble>
    </Screen>
  );
}
